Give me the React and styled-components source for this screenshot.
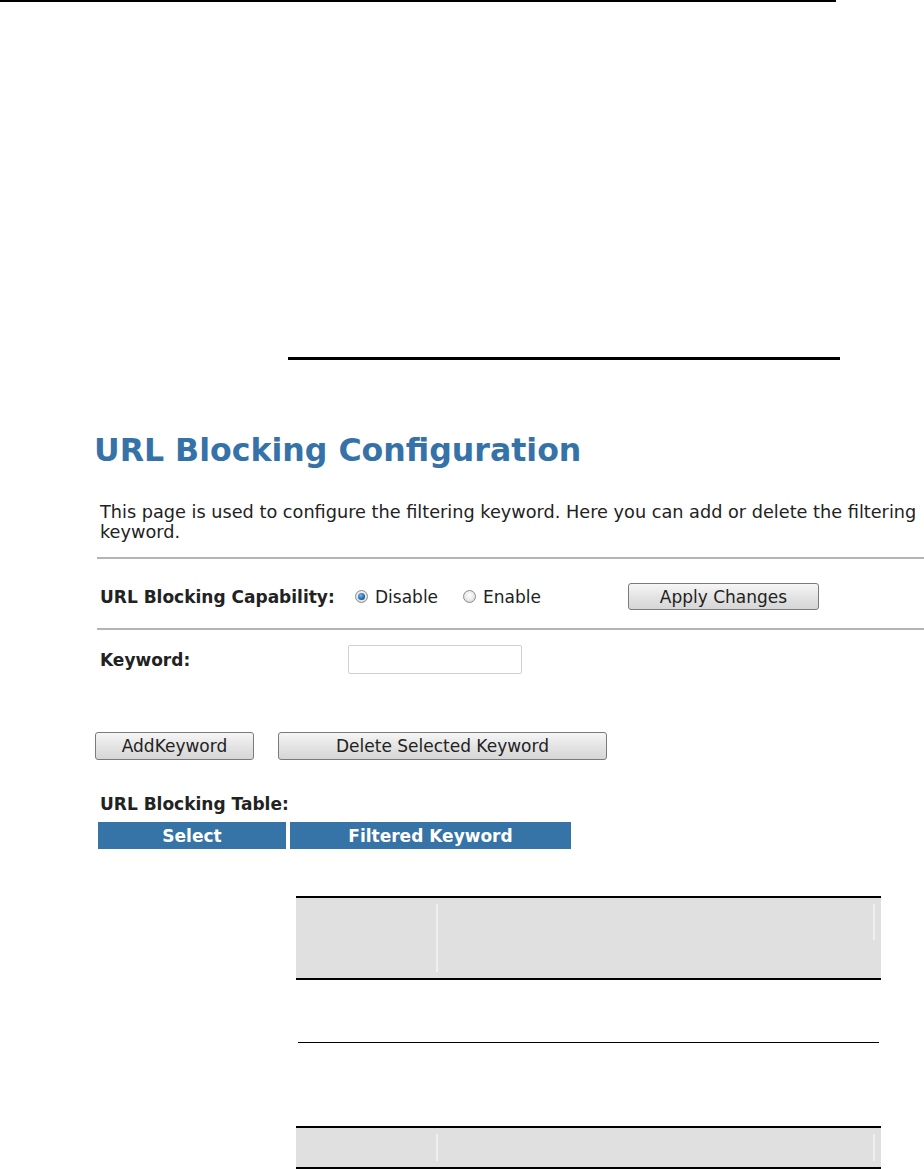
import React from "react";
import styled, { createGlobalStyle } from "styled-components";

const Global = createGlobalStyle`
  html, body { margin: 0; padding: 0; background: #fff; overflow: hidden; }
  body { font-family: "DejaVu Sans", Verdana, sans-serif; color: #222; }
  * { box-sizing: border-box; }
`;

const Page = styled.div`
  width: 924px;
  height: 1169px;
  position: relative;
`;

const TopRule = styled.div`
  width: 836px;
  height: 2px;
  background: #000;
`;

const SectionRule = styled.div`
  margin: 355px 0 0 288px;
  width: 552px;
  height: 3px;
  background: #000;
`;

const Panel = styled.div`
  margin-left: 95px;
  width: 829px;
  display: flex;
  flex-direction: column;
`;

const Heading = styled.h1`
  margin: 71px 0 0 -1px;
  font-family: "DejaVu Sans", Verdana, sans-serif;
  font-weight: bold;
  font-size: 31.6px;
  line-height: 38px;
  color: #3572a7;
  white-space: nowrap;
`;

const Description = styled.p`
  margin: 33px 0 0 5px;
  font-size: 17.7px;
  line-height: 20px;
  white-space: nowrap;
`;

const Divider = styled.div`
  margin-left: 2px;
  height: 2px;
  background: #b4b4b4;
  margin-top: ${(p) => p.$top}px;
`;

const FormRow = styled.div`
  display: grid;
  grid-template-columns: 255px auto;
  align-items: center;
  padding-left: 5px;
  margin-top: ${(p) => p.$top}px;
  height: ${(p) => p.$h}px;
`;

const Label = styled.span`
  font-weight: bold;
  font-size: 17px;
  white-space: nowrap;
`;

const Options = styled.div`
  display: flex;
  align-items: center;
`;

const RadioOption = styled.label`
  display: flex;
  align-items: center;
  gap: 7px;
  font-size: 17px;
  margin-right: ${(p) => p.$gap}px;
`;

const RadioCircle = styled.span`
  width: 13px;
  height: 13px;
  border-radius: 50%;
  border: 1px solid #8c8c8c;
  background: radial-gradient(circle at 50% 40%, #ffffff 0%, #e8e8e8 55%, #c8c8c8 100%);
  display: flex;
  align-items: center;
  justify-content: center;
  &::after {
    content: "";
    width: 7px;
    height: 7px;
    border-radius: 50%;
    background: radial-gradient(circle at 40% 35%, #7ab8ee 0%, #1f64a8 60%, #0b3f78 100%);
    display: ${(p) => (p.$checked ? "block" : "none")};
  }
`;

const Button = styled.button`
  font-family: "DejaVu Sans", Verdana, sans-serif;
  font-size: 17px;
  color: #222;
  height: ${(p) => p.$h || 28}px;
  width: ${(p) => p.$w}px;
  border: 1px solid #7a7a7a;
  border-radius: 3px;
  background: linear-gradient(#f6f6f6, #e4e4e4 50%, #d6d6d6);
  padding: 0;
  margin-left: ${(p) => p.$ml || 0}px;
  display: flex;
  align-items: center;
  justify-content: center;
`;

const TextInput = styled.input`
  width: 174px;
  height: 29px;
  margin-left: -7px;
  border: 1px solid #d0d0d0;
  border-radius: 2px;
  background: #fff;
`;

const ButtonRow = styled.div`
  display: flex;
  gap: 24px;
  margin-top: 58px;
`;

const TableLabel = styled.div`
  margin: 34px 0 0 5px;
  font-weight: bold;
  font-size: 17px;
  line-height: 20px;
`;

const HeaderRow = styled.div`
  display: grid;
  grid-template-columns: 188px 281px;
  gap: 4px;
  margin: 8px 0 0 3px;
`;

const HeaderCell = styled.div`
  background: #3673a6;
  color: #fff;
  font-weight: bold;
  font-size: 17px;
  height: 27px;
  display: flex;
  align-items: center;
  justify-content: center;
`;

const DocTable = styled.div`
  margin: 47px 0 0 296px;
  width: 585px;
  display: flex;
  flex-direction: column;
`;

const DocRow = styled.div`
  display: grid;
  grid-template-columns: 142px 1fr;
  height: ${(p) => p.$h}px;
  background: ${(p) => (p.$shaded ? "#e0e0e0" : "#fff")};
  border-top: ${(p) => (p.$topLine ? "2px solid #000" : "none")};
  border-bottom: ${(p) => p.$bottom}px solid #000;
  margin: 0 ${(p) => p.$inset || 0}px;
`;

const DocCell = styled.div`
  position: relative;
  &::after {
    content: "";
    position: absolute;
    right: ${(p) => p.$right || 0}px;
    top: 6px;
    bottom: ${(p) => p.$bottom ?? 6}px;
    width: 2px;
    background: #f0f0f0;
    display: ${(p) => (p.$line ? "block" : "none")};
  }
`;

export default function App() {
  return (
    <Page>
      <Global />
      <TopRule />
      <SectionRule />
      <Panel>
        <Heading>URL Blocking Configuration</Heading>
        <Description>
          This page is used to configure the filtering keyword. Here you can add or delete the filtering
          <br />
          keyword.
        </Description>
        <Divider $top={15} />
        <FormRow $top={24} $h={27}>
          <Label>URL Blocking Capability:</Label>
          <Options>
            <RadioOption $gap={25}>
              <RadioCircle $checked />
              Disable
            </RadioOption>
            <RadioOption $gap={0}>
              <RadioCircle />
              Enable
            </RadioOption>
            <Button $w={191} $h={27} $ml={87}>Apply Changes</Button>
          </Options>
        </FormRow>
        <Divider $top={18} />
        <FormRow $top={15} $h={29}>
          <Label>Keyword:</Label>
          <TextInput type="text" />
        </FormRow>
        <ButtonRow>
          <Button $w={159}>AddKeyword</Button>
          <Button $w={329}>Delete Selected Keyword</Button>
        </ButtonRow>
        <TableLabel>URL Blocking Table:</TableLabel>
        <HeaderRow>
          <HeaderCell>Select</HeaderCell>
          <HeaderCell>Filtered Keyword</HeaderCell>
        </HeaderRow>
      </Panel>
      <DocTable>
        <DocRow $h={84} $shaded $topLine $bottom={2}>
          <DocCell $line />
          <DocCell $line $right={6} $bottom={38} />
        </DocRow>
        <DocRow $h={63} $bottom={1} $inset={2} />
        <DocRow $h={85} $bottom={2} />
        <DocRow $h={41} $shaded $bottom={2}>
          <DocCell $line />
          <DocCell $line $right={6} />
        </DocRow>
      </DocTable>
    </Page>
  );
}
